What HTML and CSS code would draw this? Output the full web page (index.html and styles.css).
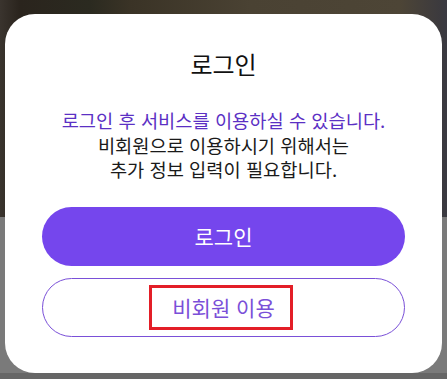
FILE: index.html
```html
<!DOCTYPE html>
<html lang="ko">
<head>
<meta charset="utf-8">
<title>로그인</title>
<link rel="stylesheet" href="styles.css">
</head>
<body>
<div class="backdrop">
  <div class="photo"></div>
  <div class="shade"></div>
  <div class="foot"></div>
</div>
<div class="modal">
  <h1 class="title">로그인</h1>
  <div class="desc">
    <p class="desc-accent">로그인 후 서비스를 이용하실 수 있습니다.</p>
    <p>비회원으로 이용하시기 위해서는</p>
    <p>추가 정보 입력이 필요합니다.</p>
  </div>
  <div class="actions">
    <button class="btn btn-primary" type="button">로그인</button>
    <button class="btn btn-outline" type="button"><span class="mark">비회원 이용</span></button>
  </div>
</div>
</body>
</html>
```
FILE: styles.css
```css
* { box-sizing: border-box; }
html, body {
  margin: 0;
  padding: 0;
  width: 447px;
  height: 379px;
  overflow: hidden;
  font-family: "Noto Sans CJK KR", "Noto Sans", sans-serif;
}
.backdrop {
  display: flex;
  flex-direction: column;
  height: 379px;
}
.photo {
  height: 217px;
  background: linear-gradient(90deg, #3a342e 0px, #2a241d 20px, #2b2a20 90px, #3a3326 130px, #4a4233 250px, #4d4536 400px, #3c3a3e 440px, #3a3a42 447px);
}
.shade {
  flex: 1;
  background: #7a7a7a;
}
.foot {
  height: 6px;
  background: #666666;
}
.modal {
  position: absolute;
  left: 5px;
  top: 14px;
  width: 437px;
  height: 359px;
  background: #ffffff;
  border-radius: 30px;
  padding: 35px 37px 0;
  display: flex;
  flex-direction: column;
  align-items: center;
}
.title {
  margin: 0;
  font-size: 24px;
  line-height: 30px;
  font-weight: 400;
  color: #111111;
}
.desc {
  margin-top: 29px;
  text-align: center;
  font-size: 18.7px;
  line-height: 24.5px;
  color: #1a1a1a;
}
.desc p { margin: 0; white-space: nowrap; }
.desc .desc-accent { color: #5b30c4; }
.actions {
  margin-top: 25px;
  width: 100%;
  display: flex;
  flex-direction: column;
  gap: 12px;
}
.btn {
  width: 100%;
  height: 59px;
  border-radius: 30px;
  font-family: inherit;
  font-size: 21px;
  display: flex;
  align-items: center;
  justify-content: center;
  padding: 0;
  cursor: pointer;
}
.btn-primary {
  background: #7546ed;
  border: none;
  color: #ffffff;
}
.btn-outline {
  background: #ffffff;
  border: 1px solid #7a50d8;
  color: #7a4fd8;
}
.mark {
  display: inline-block;
  border: 3px solid #e31e27;
  padding: 0 15px 0 20px;
  margin-right: 5px;
  line-height: 39px;
}
```
